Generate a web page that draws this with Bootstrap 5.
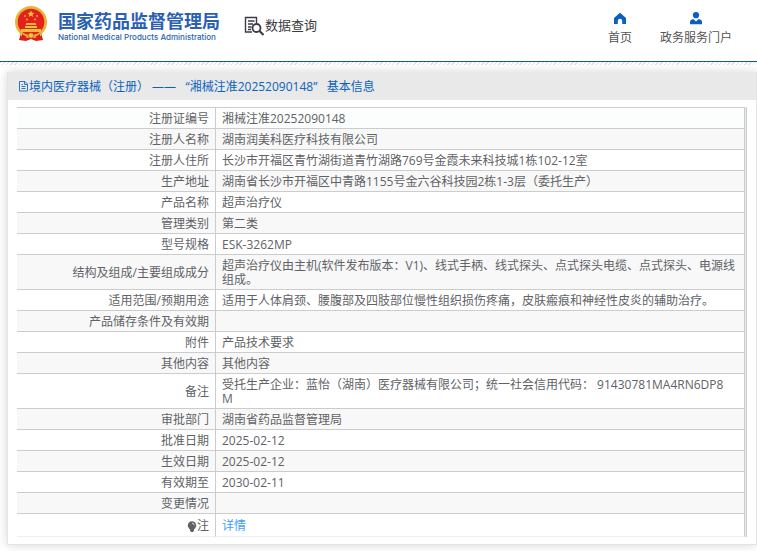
<!DOCTYPE html>
<html lang="zh-CN">
<head>
<meta charset="utf-8">
<meta name="viewport" content="width=device-width, initial-scale=1">
<title>国家药品监督管理局 数据查询</title>
<link rel="stylesheet" href="https://cdn.jsdelivr.net/npm/bootstrap@5.3.0/dist/css/bootstrap.min.css">
<style>
body{font-family:"Open Sans","Noto Sans CJK SC",sans-serif;font-size:12px;line-height:14px;color:#606266;background:#fff}
a{text-decoration:none}
.site-header{height:62px;border-bottom:1px solid #0b58a8;padding:0 25px 0 14px}
.dots{height:3px;background:repeating-linear-gradient(135deg,#e2e2e2 0 1px,#fff 1px 3px)}
.brand-link{color:#2b5fb3;gap:10px;padding-top:6px}
.brand-cn{font-family:"Noto Sans CJK SC",sans-serif;font-size:18px;line-height:20px;font-weight:700}
.brand-en{font-family:Inter,sans-serif;font-size:8px;line-height:14px;font-weight:500}
.query-link{color:#3c3b42;font-size:13px;line-height:18px;padding-top:16px;margin-left:24px}
.top-link{color:#555;padding-top:12px}
.top-link svg{margin-bottom:6px}
.top-nav{gap:28px}
.detail-card{margin:7px 0 6px 7px;border:1px solid #e4e4e4;border-top:0;border-radius:0;box-shadow:0 0 10px rgba(0,0,0,.16)}
.detail-head{background:#e9e9e9;color:#0a62bd;border:0;border-radius:0!important;padding:8px 10px;height:28px;line-height:14px}
.detail-head h1{font-size:12px;line-height:14px;font-weight:400;white-space:pre}
.detail-body{padding:7px 9px 7px}
.table-frame{border-right:1px solid #ccc;background:#e9e9e9;padding-right:1px}
.info-table{border-collapse:separate;border-spacing:0;table-layout:fixed;background:#fff;border-top:1px solid #ccc}
.info-table th,.info-table td{border:0 solid #ccc;border-width:0 1px 1px 0;padding:4px 6px 2px;height:21px;vertical-align:middle;font-weight:400}
.info-table th{width:199px;text-align:right}
.info-table td{word-break:break-all}
.info-table .remark-cell{padding-right:14px}
.info-table tr:nth-child(even){background:#f8f8f8}
.info-table tr:first-child{background:#fcfefd}
.info-table tr:last-child>*{height:23px;border-bottom-color:#ebeef5}
.info-table a{color:#409eff}
</style>
</head>
<body>
<header class="site-header d-flex align-items-start">
  <a href="#" class="brand-link d-flex">
    <svg width="34" height="36" viewBox="0 0 34 36" aria-hidden="true">
      <path d="M7 27 5 34l7 1 5-2 5 2 7-1-2-7z" fill="#d91f1b"/>
      <circle cx="17" cy="16" r="16" fill="#e9b43a"/>
      <circle cx="17" cy="16" r="13.3" fill="#e3221d"/>
      <path d="m17 4.500 1 2.200 2.500.2-1.900 1.600.6 2.400-2.200-1.300-2.200 1.300.6-2.400-1.900-1.600 2.500-.2z" fill="#f8cb3d"/>
      <g fill="#f5bd37"><circle cx="11" cy="10" r=".9"/><circle cx="13" cy="13.500" r=".9"/><circle cx="21" cy="13.500" r=".9"/><circle cx="23" cy="10" r=".9"/><path d="M12.500 17h9l1 2h-11zM11 20h12v2H11zM7 23h20v3H7z"/></g>
      <path d="M6 25q5 4 11 4t11-4l-1 5q-4 2-10 2T7 30z" fill="#e9b43a"/>
      <path d="m8 28 5 3-5 2zm18 0-5 3 5 2z" fill="#d91f1b"/>
      <circle cx="17" cy="29.500" r="2.700" fill="#f3c342" stroke="#ce3b1a" stroke-width=".7"/>
    </svg>
    <span class="d-flex flex-column pt-1">
      <span class="brand-cn">国家药品监督管理局</span>
      <span class="brand-en">National Medical Products Administration</span>
    </span>
  </a>
  <a href="#" class="query-link d-flex">
    <svg width="21" height="20" viewBox="0 0 21 20" fill="none" stroke="#3c3a48" aria-hidden="true">
      <path d="M8 16H1.500V1.500h11V7M4 5h6.500M4 8h5M4 11h3.500M4 13.500h3" stroke-width="1.400"/>
      <circle cx="12.500" cy="12" r="4" stroke-width="1.800"/>
      <path d="m15.500 15 4 4" stroke-width="2.200"/>
    </svg>
    <span>数据查询</span>
  </a>
  <nav class="top-nav d-flex ms-auto" aria-label="站点导航">
    <a href="#" class="top-link d-flex flex-column align-items-center">
      <svg width="14" height="13" viewBox="0 0 14 13" fill="#0a5fc0" aria-hidden="true"><path d="M7 .8 13 6v6H9.200V9a2.200 2.200 0 0 0-4.400 0v3H1V6z"/></svg>
      <span>首页</span>
    </a>
    <a href="#" class="top-link d-flex flex-column align-items-center">
      <svg width="14" height="13" viewBox="0 0 14 13" fill="#0a5fc0" aria-hidden="true"><circle cx="7" cy="3.200" r="3.100"/><path d="M1 12.200V10q0-2.500 3.500-3L7 9.500 9.500 7q3.500.5 3.500 3v2.200z"/></svg>
      <span>政务服务门户</span>
    </a>
  </nav>
</header>
<div class="dots"></div>
<main class="card detail-card">
  <div class="card-header detail-head d-flex">
    <svg class="flex-shrink-0" width="11" height="12" viewBox="0 0 11 12" fill="none" stroke="#2d73c4" aria-hidden="true"><path d="M1.500 1.500H7L9.500 4v7h-8zM6.500 1.500v3h3M3.500 4.500H5M3.500 6.500h4M3.500 8.500h4"/></svg>
    <h1 class="mb-0">境内医疗器械（注册） ——   “湘械注准20252090148”   基本信息</h1>
  </div>
  <div class="detail-body">
    <div class="table-frame">
      <table class="info-table w-100">
        <tbody>
          <tr><th scope="row">注册证编号</th><td>湘械注准20252090148</td></tr>
          <tr><th scope="row">注册人名称</th><td>湖南润美科医疗科技有限公司</td></tr>
          <tr><th scope="row">注册人住所</th><td>长沙市开福区青竹湖街道青竹湖路769号金霞未来科技城1栋102-12室</td></tr>
          <tr><th scope="row">生产地址</th><td>湖南省长沙市开福区中青路1155号金六谷科技园2栋1-3层（委托生产）</td></tr>
          <tr><th scope="row">产品名称</th><td>超声治疗仪</td></tr>
          <tr><th scope="row">管理类别</th><td>第二类</td></tr>
          <tr><th scope="row">型号规格</th><td>ESK-3262MP</td></tr>
          <tr><th scope="row">结构及组成/主要组成成分</th><td>超声治疗仪由主机(软件发布版本：V1)、线式手柄、线式探头、点式探头电缆、点式探头、电源线组成。</td></tr>
          <tr><th scope="row">适用范围/预期用途</th><td>适用于人体肩颈、腰腹部及四肢部位慢性组织损伤疼痛，皮肤瘢痕和神经性皮炎的辅助治疗。</td></tr>
          <tr><th scope="row">产品储存条件及有效期</th><td></td></tr>
          <tr><th scope="row">附件</th><td>产品技术要求</td></tr>
          <tr><th scope="row">其他内容</th><td>其他内容</td></tr>
          <tr><th scope="row">备注</th><td class="remark-cell">受托生产企业：蓝怡（湖南）医疗器械有限公司；统一社会信用代码： 91430781MA4RN6DP8M</td></tr>
          <tr><th scope="row">审批部门</th><td>湖南省药品监督管理局</td></tr>
          <tr><th scope="row">批准日期</th><td>2025-02-12</td></tr>
          <tr><th scope="row">生效日期</th><td>2025-02-12</td></tr>
          <tr><th scope="row">有效期至</th><td>2030-02-11</td></tr>
          <tr><th scope="row">变更情况</th><td></td></tr>
          <tr><th scope="row"><svg width="10" height="12" viewBox="0 0 10 12" aria-hidden="true"><circle cx="5" cy="4.500" r="4.200" fill="#606266"/><path d="M3 8h4v1.500L6 11H4L3 9.500z" fill="#606266"/><path d="M5 2q2 .2 2.300 2.300" fill="none" stroke="#fff" stroke-width=".8"/></svg>注</th><td><a href="#">详情</a></td></tr>
        </tbody>
      </table>
    </div>
  </div>
</main>
<script src="https://cdn.jsdelivr.net/npm/bootstrap@5.3.0/dist/js/bootstrap.bundle.min.js"></script>
</body>
</html>
